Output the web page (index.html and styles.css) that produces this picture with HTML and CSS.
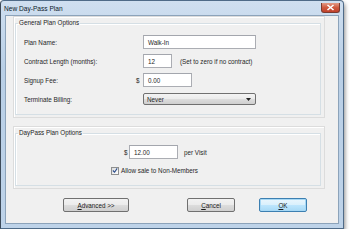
FILE: index.html
```html
<!DOCTYPE html>
<html lang="en">
<head>
  <meta charset="UTF-8" />
  <title>New Day-Pass Plan</title>
  <link rel="stylesheet" href="styles.css">
</head>
<body>
  <!-- Dialog window -->
  <div class="window">
    <div class="titlebar">
      <span class="title">New Day-Pass Plan</span>
      <span class="close">
        <svg width="9" height="7" viewBox="0 0 9 7"><path d="M1.5 1 L7.5 6 M7.5 1 L1.5 6" stroke="#fff" stroke-width="1.6"/></svg>
      </span>
    </div>

    <div class="client">
      <!-- General options -->
      <div class="panel">
        <fieldset class="group">
          <legend>General Plan Options</legend>
          <div class="row">
            <label class="lbl">Plan Name:</label><span class="cur"></span>
            <div class="input wide">Walk-In</div>
          </div>
          <div class="row">
            <label class="lbl">Contract Length (months):</label><span class="cur"></span>
            <div class="input short">12</div>
            <span class="hint">(Set to zero if no contract)</span>
          </div>
          <div class="row">
            <label class="lbl">Signup Fee:</label><span class="cur">$</span>
            <div class="input mid">0.00</div>
          </div>
          <div class="row">
            <label class="lbl">Terminate Billing:</label><span class="cur"></span>
            <div class="select">
              <span>Never</span>
              <svg width="5" height="3" viewBox="0 0 5 3"><path d="M0 0 H5 L2.5 3 Z" fill="#222"/></svg>
            </div>
          </div>
        </fieldset>
      </div>

      <!-- Day pass options -->
      <div class="panel">
        <fieldset class="group group2">
          <legend>DayPass Plan Options</legend>
          <div class="row price">
            <span class="cur2">$</span>
            <div class="input mid">12.00</div>
            <span class="unit">per Visit</span>
          </div>
          <div class="row check-row">
            <span class="checkbox">
              <svg width="7" height="7" viewBox="0 0 7 7"><path d="M1 3.5 L3 5.5 L6 1" stroke="#2b4d8c" stroke-width="1.3" fill="none"/></svg>
            </span>
            <span>Allow sale to Non-Members</span>
          </div>
        </fieldset>
      </div>

      <div class="buttons">
        <button class="btn adv"><u>A</u>dvanced &gt;&gt;</button>
        <button class="btn cancel"><u>C</u>ancel</button>
        <button class="btn ok"><u>O</u>K</button>
      </div>
    </div>
  </div>
</body>
</html>
```

FILE: styles.css
```css
body {
  margin: 0;
  background: #fff;
  font-family: 'Liberation Sans', Arial, sans-serif;
  font-size: 6.3px;
  color: #262626;
}

.window {
  width: 344px;
  height: 229px;
  box-sizing: border-box;
  border: 1px solid #4f6b88;
  border-left-color: #3d4b5a;
  border-radius: 4px 4px 0 0;
  background: linear-gradient(#cfdff0, #b9cfe6 30%, #bed3e9);
  padding: 0 4px 4px 4px;
  box-shadow: 1px 3px 4px rgba(0, 0, 0, 0.45);
  display: flex;
  flex-direction: column;
}

.titlebar {
  height: 14px;
  display: flex;
  align-items: center;
  justify-content: space-between;
}

.title {
  margin-left: -1px;
  font-size: 6.6px;
  color: #0c1a2a;
}

.close {
  width: 19px;
  height: 10px;
  margin-right: -1px;
  margin-top: -1px;
  border: 1px solid #7a3a30;
  border-top: none;
  border-radius: 0 0 3px 3px;
  box-sizing: border-box;
  background: linear-gradient(#e39a86, #cf5a40 50%, #c0402a);
  display: flex;
  align-items: center;
  justify-content: center;
}

.client {
  flex: 1;
  background: #f0f0f0;
  border: 1px solid #8ca3ba;
  padding: 0 0 0 7px;
}

.panel {
  width: 312px;
  box-sizing: border-box;
  border: 1px solid #dcdcdc;
  box-shadow: inset 1px 1px 0 #fff;
  margin-bottom: 8px;
  padding: 2px 3px 2px 1px;
}

.group {
  margin: 0;
  border: 1px solid #d5dfe5;
  box-shadow: inset 1px 1px 0 #fff;
  padding: 8px 8px 3px 8px;
  min-width: 0;
}

.group legend {
  padding: 0 1px;
  margin-left: -6px;
  line-height: 8px;
  color: #222;
}

.row {
  display: flex;
  align-items: center;
  height: 14px;
  margin-bottom: 5px;
}

.lbl {
  width: 112px;
}

.cur {
  width: 7px;
}

.input {
  height: 14px;
  box-sizing: border-box;
  background: #fff;
  border: 1px solid #abadb3;
  border-top-color: #a3a6ad;
  padding: 0 4px;
  display: flex;
  align-items: center;
}

.wide { width: 113px; }
.short { width: 29px; }
.mid { width: 49px; }

.hint {
  margin-left: 8px;
}

.select {
  width: 113px;
  height: 12px;
  box-sizing: border-box;
  border: 1px solid #707070;
  border-radius: 2px;
  background: linear-gradient(#f3f3f3, #ebebeb 50%, #dddddd 51%, #cfcfcf);
  display: flex;
  align-items: center;
  justify-content: space-between;
  padding: 0 4px 0 3px;
}

.group2 {
  padding-top: 8px;
  padding-bottom: 5px;
}

.price {
  margin-left: 100px;
  margin-bottom: 7px;
}

.cur2 {
  width: 5px;
}

.unit {
  margin-left: 6px;
}

.check-row {
  margin-left: 87px;
  height: 9px;
}

.checkbox {
  width: 8px;
  height: 8px;
  box-sizing: border-box;
  border: 1px solid #8e8f8f;
  background: linear-gradient(135deg, #dcdcdc, #fff);
  display: flex;
  align-items: center;
  justify-content: center;
  margin-right: 2px;
}

.buttons {
  display: flex;
  margin-top: 9px;
  padding-left: 50px;
}

.btn {
  height: 14px;
  padding: 0;
  font: inherit;
  color: #1a1a1a;
  border: 1px solid #707070;
  border-radius: 2px;
  background: linear-gradient(#f2f2f2, #ebebeb 50%, #dddddd 51%, #cfcfcf);
}

.btn u {
  text-decoration-thickness: 0.5px;
}

.adv { width: 66px; }
.cancel { width: 48px; margin-left: 58px; }
.ok {
  width: 48px;
  margin-left: 24px;
  border-color: #3c7fb1;
  box-shadow: inset 0 0 0 1px #a6d8f5;
  background: linear-gradient(#eaf6fd, #d9f0fc 50%, #bee6fd 51%, #a7d9f5);
}
```
